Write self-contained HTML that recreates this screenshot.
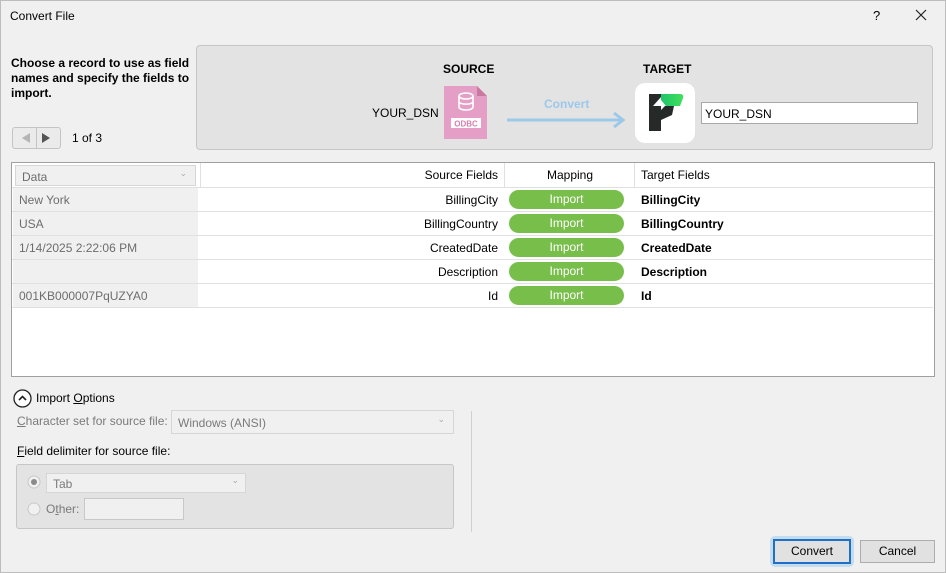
<!DOCTYPE html>
<html><head><style>
*{box-sizing:border-box;margin:0;padding:0}
body{width:946px;height:573px;background:#f0f0f0;font-family:"Liberation Sans",sans-serif;font-size:12px;color:#000;position:relative;overflow:hidden}
.a{position:absolute}
.row{position:absolute;left:0;width:921px;height:24px;border-bottom:1px solid #e0e0e0}
.row .d{position:absolute;left:1px;top:0;width:185px;height:23px;background:#f0f0f0;color:#6d6d6d;padding:5px 0 0 6px}
.row .s{position:absolute;left:186px;width:300px;text-align:right;top:5px}
.row .p{position:absolute;left:497px;top:2px;width:115px;height:19px;border-radius:10px;background:#77bf4a;color:#fff;text-align:center;line-height:19px}
.row .t{position:absolute;left:629px;top:5px;font-weight:bold}
</style></head><body>
<div class="a" style="left:0;top:0;width:946px;height:573px;border:1px solid #bdbdbd"></div>
<div class="a" style="left:10px;top:9px">Convert File</div>
<div class="a" style="left:873px;top:8px;font-size:13px">?</div>
<svg class="a" style="left:915px;top:9px" width="12" height="12"><path d="M1 1L11 11M11 1L1 11" stroke="#222" stroke-width="1.2"/></svg>

<div class="a" style="left:11px;top:56px;font-weight:bold;line-height:15px;width:185px">Choose a record to use as field names and specify the fields to import.</div>
<div class="a" style="left:12px;top:127px;width:49px;height:22px;border:1px solid #c4c4c4;border-radius:3px;background:#ebebeb"></div>
<div class="a" style="left:36px;top:127px;width:1px;height:22px;background:#c4c4c4"></div>
<svg class="a" style="left:18px;top:132px" width="40" height="12"><path d="M4 6L12 1V11Z" fill="#b5b5b5"/><path d="M24 1L32 6L24 11Z" fill="#555"/></svg>
<div class="a" style="left:72px;top:131px">1 of 3</div>

<div class="a" style="left:196px;top:45px;width:737px;height:105px;background:#e3e3e3;border:1px solid #c6c6c6;border-radius:4px"></div>
<div class="a" style="left:443px;top:62px;font-weight:bold">SOURCE</div>
<div class="a" style="left:372px;top:106px">YOUR_DSN</div>
<svg class="a" style="left:444px;top:86px" width="44" height="54"><path d="M0 0H33L43 10V53H0Z" fill="#e59ec6"/><path d="M33 0L43 10H33Z" fill="#c9799f"/><rect x="7" y="32" width="30" height="10" fill="#fff"/><text x="22" y="40.5" font-size="8" font-weight="bold" fill="#d47fae" text-anchor="middle" font-family="Liberation Sans">ODBC</text><ellipse cx="22" cy="10" rx="7" ry="3" fill="none" stroke="#fff" stroke-width="1.6"/><path d="M15 10V21C15 25 29 25 29 21V10M15 15.5C15 19 29 19 29 15.5" fill="none" stroke="#fff" stroke-width="1.6"/></svg>
<div class="a" style="left:544px;top:97px;color:#9cc8ea;font-weight:bold">Convert</div>
<svg class="a" style="left:505px;top:110px" width="122" height="20"><path d="M2 10H118M109 3L118 10L109 17" fill="none" stroke="#9cc8ea" stroke-width="3"/></svg>
<div class="a" style="left:643px;top:62px;font-weight:bold">TARGET</div>
<div class="a" style="left:635px;top:83px;width:60px;height:60px;background:#fff;border-radius:10px"></div>
<svg class="a" style="left:649px;top:94px" width="36" height="40">
<defs><linearGradient id="g" x1="0" x2="1"><stop offset="0" stop-color="#1fc46a"/><stop offset="1" stop-color="#3fe05a"/></linearGradient></defs>
<path d="M0 0H12V37H0Z" fill="#252a28"/>
<path d="M12 3V12H4Z" fill="#fff"/>
<path d="M12 0H31Q35 0 34 4L31 12H12Z" fill="url(#g)"/>
<path d="M12 12V6L17 12Z" fill="#fff"/>
<path d="M12 12H25L23 21L12 26Z" fill="#252a28"/>
<path d="M12 12H16L12 16Z" fill="#fff"/>
</svg>
<div class="a" style="left:701px;top:102px;width:217px;height:22px;background:#fff;border:1px solid #a8a8a8;padding:4px 0 0 3px">YOUR_DSN</div>

<div class="a" style="left:11px;top:162px;width:924px;height:215px;background:#fff;border:1px solid #a0a0a0">
 <div class="a" style="left:3px;top:2px;width:181px;height:21px;background:#f0f0f0;border:1px solid #d6d6d6;color:#6d6d6d;padding:4px 0 0 6px">Data<span style="position:absolute;right:8px;top:2px;font-size:9px;color:#aaa">&#8964;</span></div>
 <div class="a" style="left:188px;top:0;width:1px;height:24px;background:#e0e0e0"></div>
 <div class="a" style="left:186px;top:5px;width:300px;text-align:right">Source Fields</div>
 <div class="a" style="left:492px;top:0;width:1px;height:24px;background:#e0e0e0"></div>
 <div class="a" style="left:493px;top:5px;width:130px;text-align:center">Mapping</div>
 <div class="a" style="left:622px;top:0;width:1px;height:24px;background:#e0e0e0"></div>
 <div class="a" style="left:629px;top:5px">Target Fields</div>
 <div class="a" style="left:0;top:24px;width:922px;height:1px;background:#e0e0e0"></div>
 <div class="row" style="top:25px"><div class="d">New York</div><div class="s">BillingCity</div><div class="p">Import</div><div class="t">BillingCity</div></div>
 <div class="row" style="top:49px"><div class="d">USA</div><div class="s">BillingCountry</div><div class="p">Import</div><div class="t">BillingCountry</div></div>
 <div class="row" style="top:73px"><div class="d">1/14/2025 2:22:06 PM</div><div class="s">CreatedDate</div><div class="p">Import</div><div class="t">CreatedDate</div></div>
 <div class="row" style="top:97px"><div class="d"></div><div class="s">Description</div><div class="p">Import</div><div class="t">Description</div></div>
 <div class="row" style="top:121px"><div class="d">001KB000007PqUZYA0</div><div class="s">Id</div><div class="p">Import</div><div class="t">Id</div></div>
</div>

<svg class="a" style="left:13px;top:389px" width="19" height="19"><circle cx="9.5" cy="9.5" r="8.5" fill="#fff" stroke="#222" stroke-width="1.3"/><path d="M6 11L9.5 7.5L13 11" fill="none" stroke="#222" stroke-width="1.6"/></svg>
<div class="a" style="left:36px;top:391px">Import <u>O</u>ptions</div>
<div class="a" style="left:17px;top:414px;color:#7a7a7a"><u>C</u>haracter set for source file:</div>
<div class="a" style="left:171px;top:410px;width:283px;height:24px;border:1px solid #d6d6d6;background:#f0f0f0;color:#7a7a7a;padding:5px 0 0 6px">Windows (ANSI)<span style="position:absolute;right:8px;top:3px;font-size:9px;color:#aaa">&#8964;</span></div>
<div class="a" style="left:17px;top:444px"><u>F</u>ield delimiter for source file:</div>
<div class="a" style="left:16px;top:464px;width:438px;height:65px;background:#e3e3e3;border:1px solid #c6c6c6;border-radius:3px"></div>
<svg class="a" style="left:27px;top:475px" width="14" height="42"><circle cx="7" cy="7" r="6" fill="#f0f0f0" stroke="#c8c8c8"/><circle cx="7" cy="7" r="3" fill="#8a8a8a"/><circle cx="7" cy="34" r="6" fill="#f0f0f0" stroke="#c8c8c8"/></svg>
<div class="a" style="left:46px;top:473px;width:200px;height:20px;background:#f0f0f0;border:1px solid #d6d6d6;color:#7a7a7a;padding:3px 0 0 6px">Tab<span style="position:absolute;right:6px;top:1px;font-size:9px;color:#aaa">&#8964;</span></div>
<div class="a" style="left:46px;top:502px;color:#7a7a7a">O<u>t</u>her:</div>
<div class="a" style="left:84px;top:498px;width:100px;height:22px;background:#f0f0f0;border:1px solid #c8c8c8"></div>
<div class="a" style="left:471px;top:411px;width:1px;height:121px;background:#d0d0d0"></div>

<div class="a" style="left:770px;top:536px;width:84px;height:31px;border-radius:5px;background:#c3dcf0"></div>
<div class="a" style="left:773px;top:539px;width:78px;height:25px;border:2px solid #1e6fc7;background:#e1e1e1;text-align:center;line-height:21px">Convert</div>
<div class="a" style="left:860px;top:540px;width:75px;height:23px;border:1px solid #adadad;background:#e1e1e1;text-align:center;line-height:21px">Cancel</div>
</body></html>
